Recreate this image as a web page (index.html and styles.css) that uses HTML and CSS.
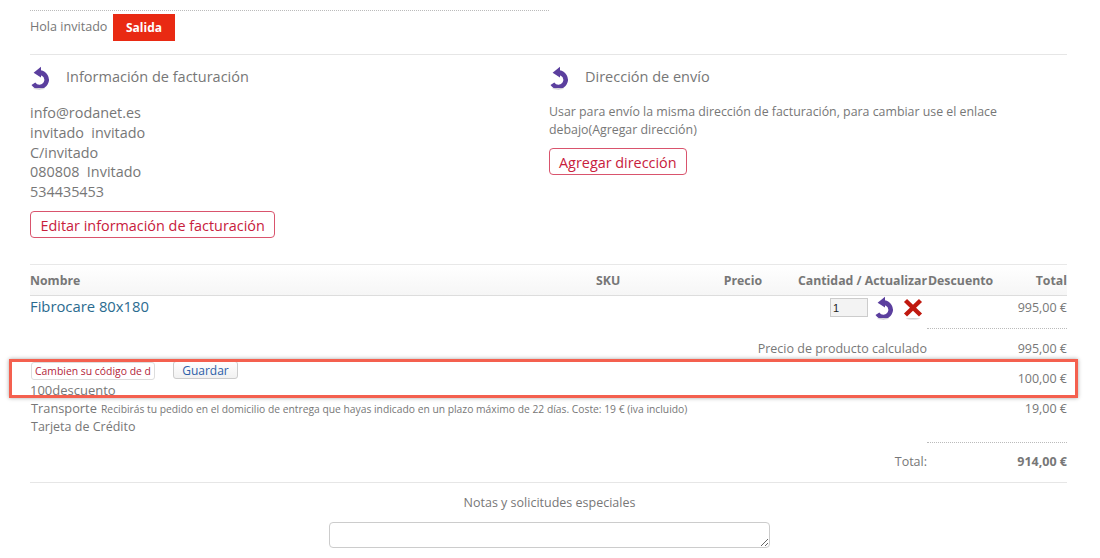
FILE: index.html
```html
<!DOCTYPE html>
<html lang="es">
<head>
<meta charset="utf-8">
<title>Checkout</title>
<link rel="stylesheet" href="styles.css">
</head>
<body>
<svg class="sprite" width="0" height="0" aria-hidden="true">
  <symbol id="reload" viewBox="0 0 22 24">
    <path d="M9.5 6.6 A7.2 7.2 0 1 1 3.4 17.8" fill="none" stroke="#5b3f9e" stroke-width="4.6"/>
    <path d="M3.6 6.8 L11 0.8 L11 11.6 Z" fill="#5b3f9e"/>
    <ellipse cx="9" cy="22.8" rx="6" ry="0.8" fill="#dcdcdc"/>
  </symbol>
</svg>
<main class="page">
  <div class="login">
    <span class="hello">Hola invitado</span>
    <a class="logout">Salida</a>
  </div>
  <section class="addresses">
    <div class="address">
      <h3 class="heading"><svg class="icon"><use href="#reload"/></svg>Información de facturación</h3>
      <p class="lines">info@rodanet.es<br>invitado&nbsp; invitado<br>C/invitado<br>080808&nbsp; Invitado<br>534435453</p>
      <a class="outline">Editar información de facturación</a>
    </div>
    <div class="address">
      <h3 class="heading"><svg class="icon"><use href="#reload"/></svg>Dirección de envío</h3>
      <p class="note">Usar para envío la misma dirección de facturación, para cambiar use el enlace debajo(Agregar dirección)</p>
      <a class="outline">Agregar dirección</a>
    </div>
  </section>
  <section class="cart">
    <div class="cart-head">
      <span>Nombre</span><span>SKU</span><span class="end">Precio</span><span class="end">Cantidad / Actualizar</span><span class="discount">Descuento</span><span class="end">Total</span>
    </div>
    <div class="item">
      <a class="product">Fibrocare 80x180</a>
      <div class="qty">
        <input class="qty-input" value="1" aria-label="Cantidad">
        <svg class="qty-reload"><use href="#reload"/></svg>
        <svg class="remove" viewBox="0 0 20 22"><path d="M2.5 2.5 L17.5 17 M17.5 2.5 L2.5 17" stroke="#c0190f" stroke-width="4.4" fill="none"/><ellipse cx="10" cy="20.8" rx="7" ry="0.8" fill="#d0d0d0"/></svg>
      </div>
      <span class="amount">995,00 €</span>
    </div>
    <div class="rule"></div>
    <div class="summary subtotal"><span>Precio de producto calculado</span><span class="amount">995,00 €</span></div>
    <div class="coupon">
      <div class="coupon-main">
        <div class="coupon-form">
          <input class="coupon-input" value="Cambien su código de descuento" aria-label="Código">
          <button class="save">Guardar</button>
        </div>
        <div class="coupon-name">100descuento</div>
      </div>
      <span class="amount coupon-amount">100,00 €</span>
    </div>
    <div class="shipping">
      <div class="shipping-main">
        <div class="ship-line"><span class="ship-title">Transporte</span> <small class="ship-note">Recibirás tu pedido en el domicilio de entrega que hayas indicado en un plazo máximo de 22 días. Coste: 19 € (iva incluido)</small></div>
        <div class="payment">Tarjeta de Crédito</div>
      </div>
      <span class="amount">19,00 €</span>
    </div>
    <div class="rule"></div>
    <div class="summary total"><span>Total:</span><strong class="amount">914,00 €</strong></div>
  </section>
  <section class="notes">
    <label class="notes-label" for="notes">Notas y solicitudes especiales</label>
    <textarea class="notes-box" id="notes"></textarea>
  </section>
  <div class="highlight"></div>
</main>
</body>
</html>
```
FILE: styles.css
```css
* { box-sizing: border-box; }
html, body { margin: 0; height: 558px; overflow: hidden; background: #fff; }
body { font-family: "Open Sans", "Liberation Sans", sans-serif; color: #777; }
.sprite { position: absolute; }
.page { position: relative; width: 1037px; margin-left: 30px; padding-top: 10px; }

.login { width: 519px; height: 44px; padding-top: 3px; border-top: 1px dotted #bbb; display: flex; align-items: flex-start; gap: 5px; }
.hello { width: 78px; font-size: 12.6px; line-height: 26px; white-space: nowrap; }
.logout { width: 62px; height: 27px; background: #e92a13; color: #fff; font-size: 12px; font-weight: 700; line-height: 27px; text-align: center; }

.addresses { display: grid; grid-template-columns: 519px 518px; height: 210px; border-top: 1px solid #e6e6e6; }
.heading { margin: 0; height: 45px; padding-bottom: 2px; display: flex; align-items: center; gap: 14px; font-size: 14.5px; font-weight: 400; color: #777; }
.heading .icon { width: 22px; height: 24px; margin-top: 3px; }
.lines { margin: 0; font-size: 14.4px; line-height: 19.75px; padding-top: 3px; color: #777; }
.note { margin: 0; font-size: 12.36px; line-height: 17.5px; padding-top: 3px; width: 480px; }
.outline { display: inline-block; height: 27px; margin-top: 9px; padding: 0 9.5px; border: 1px solid #d9546d; border-radius: 4px; color: #c8203c; font-size: 14.4px; line-height: 27px; white-space: nowrap; }
.address:last-child .outline { margin-top: 10px; padding: 0 9px; }

.cart-head { display: grid; grid-template-columns: 566px 100px 66px 165px 65px 75px; height: 32px; border-top: 1px solid #e8e8e8; border-bottom: 1px solid #ddd; background: linear-gradient(#fff, #f6f6f6); font-size: 12.3px; font-weight: 700; line-height: 32px; color: #777; white-space: nowrap; }
.discount { margin-left: 1px; }
.end { text-align: right; }
.item { position: relative; display: flex; justify-content: space-between; height: 32px; }
.product { color: #2b6b8f; font-size: 14.8px; line-height: 20px; }
.amount { font-size: 12.5px; line-height: 24px; color: #777; }
.qty { position: absolute; left: 800px; top: 0; display: flex; align-items: flex-start; }
.qty-input { width: 38px; height: 19px; margin-top: 2px; padding: 0 0 0 2px; border: 1px solid #ccc; background: #f3f3f3; color: #222; font-family: "Liberation Sans", sans-serif; font-size: 11px; }
.qty-reload { width: 22px; height: 24px; margin: 0 0 0 6px; }
.remove { width: 20px; height: 22px; margin: 2px 0 0 7px; }
.rule { width: 140px; margin-left: 897px; border-top: 1px dotted #bbb; }
.summary { display: flex; justify-content: flex-end; font-size: 12.5px; line-height: 24px; }
.subtotal { height: 31px; padding-top: 8px; }
.summary .amount { width: 140px; text-align: right; }
.coupon { display: flex; justify-content: space-between; height: 37px; padding-left: 1px; }
.coupon-form { display: flex; align-items: flex-start; gap: 18px; height: 21px; }
.coupon-input { width: 124px; height: 18px; margin-top: 2px; padding: 0 3px; border: 1px solid #ddd; border-radius: 3px; color: #b3243a; font-family: "Open Sans", sans-serif; font-size: 10.4px; background: #fff; }
.save { width: 65px; height: 18px; margin-top: 1px; padding: 0; border: 1px solid #ccc; border-radius: 3px; background: linear-gradient(#fff, #f1f1f1); color: #2d5fa8; font-family: "Open Sans", sans-serif; font-size: 12px; line-height: 15px; }
.coupon-name { margin-left: -1px; font-size: 13px; line-height: 19px; }
.coupon-amount { padding-top: 7px; }
.shipping { display: flex; justify-content: space-between; height: 45px; padding-left: 1px; }
.ship-line { padding-top: 1px; line-height: 18px; }
.ship-title { font-size: 12.8px; }
.ship-note { font-size: 10.3px; }
.payment { padding-top: 1px; font-size: 12.5px; line-height: 16px; }
.shipping .amount { padding-top: 2px; line-height: 19px; }
.total { height: 40px; padding-top: 7px; border-bottom: 1px solid #e6e6e6; }
.total .amount { font-weight: 700; }

.notes { padding: 11px 297px 0 299px; display: flex; flex-direction: column; align-items: center; }
.notes-label { font-size: 12.5px; line-height: 18px; text-align: center; }
.notes-box { display: block; width: 441px; height: 26px; margin-top: 10px; border: 1px solid #ccc; border-radius: 4px; background: #fff; }

.highlight { position: absolute; left: -21px; top: 359px; width: 1069px; height: 39px; border: 3px solid #f4604f; box-shadow: 0 0 4px rgba(0, 0, 0, .35); }
```
